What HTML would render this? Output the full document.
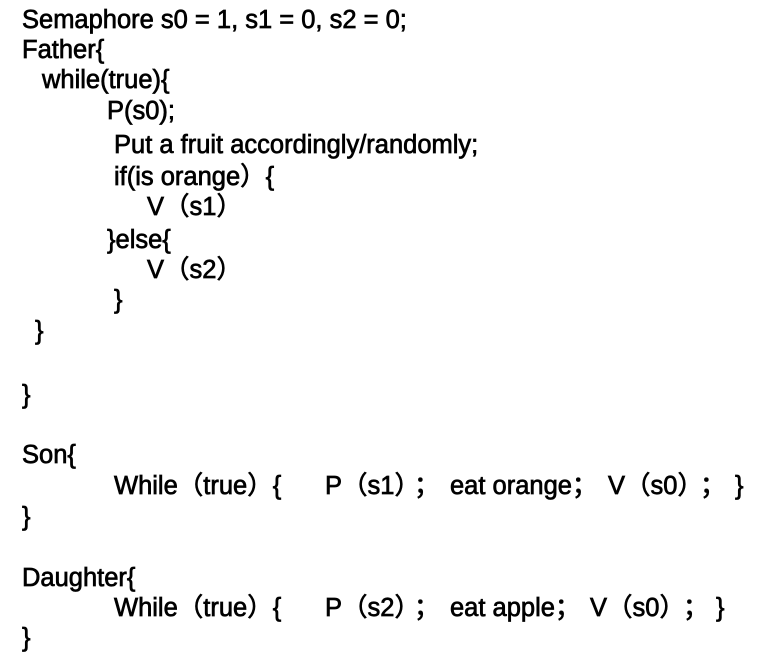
<!DOCTYPE html>
<html><head><meta charset="utf-8"><style>
html,body{margin:0;padding:0;background:#fff;width:773px;height:657px;overflow:hidden}
div{position:absolute;white-space:pre;font-family:"Liberation Sans","Noto Sans CJK SC",sans-serif;font-size:25.5px;line-height:30px;color:#000;-webkit-text-stroke:0.7px #000}
</style></head><body>
<div style="left:22px;top:5px">Semaphore s0 = 1, s1 = 0, s2 = 0;</div>
<div style="left:22px;top:35px">Father{</div>
<div style="left:42px;top:65px">while(true){</div>
<div style="left:107px;top:96px">P(s0);</div>
<div style="left:114px;top:130px">Put a fruit accordingly/randomly;</div>
<div style="left:114px;top:162px">if(is orange）{</div>
<div style="left:147px;top:192px">V（s1）</div>
<div style="left:107px;top:225px">}else{</div>
<div style="left:147px;top:255px">V（s2）</div>
<div style="left:114px;top:285px">}</div>
<div style="left:35px;top:316px">}</div>
<div style="left:22px;top:380px">}</div>
<div style="left:22px;top:440px">Son{</div>
<div style="left:114px;top:471px">While（true）{</div>
<div style="left:325px;top:471px">P（s1）</div>
<div style="left:414px;top:471px">；</div>
<div style="left:450px;top:471px">eat orange；</div>
<div style="left:608px;top:471px">V（s0）</div>
<div style="left:700px;top:471px">；</div>
<div style="left:735px;top:471px">}</div>
<div style="left:22px;top:502px">}</div>
<div style="left:22px;top:563px">Daughter{</div>
<div style="left:114px;top:593px">While（true）{</div>
<div style="left:325px;top:593px">P（s2）</div>
<div style="left:414px;top:593px">；</div>
<div style="left:450px;top:593px">eat apple；</div>
<div style="left:590px;top:593px">V（s0）</div>
<div style="left:683px;top:593px">；</div>
<div style="left:716px;top:593px">}</div>
<div style="left:22px;top:623px">}</div>
</body></html>
